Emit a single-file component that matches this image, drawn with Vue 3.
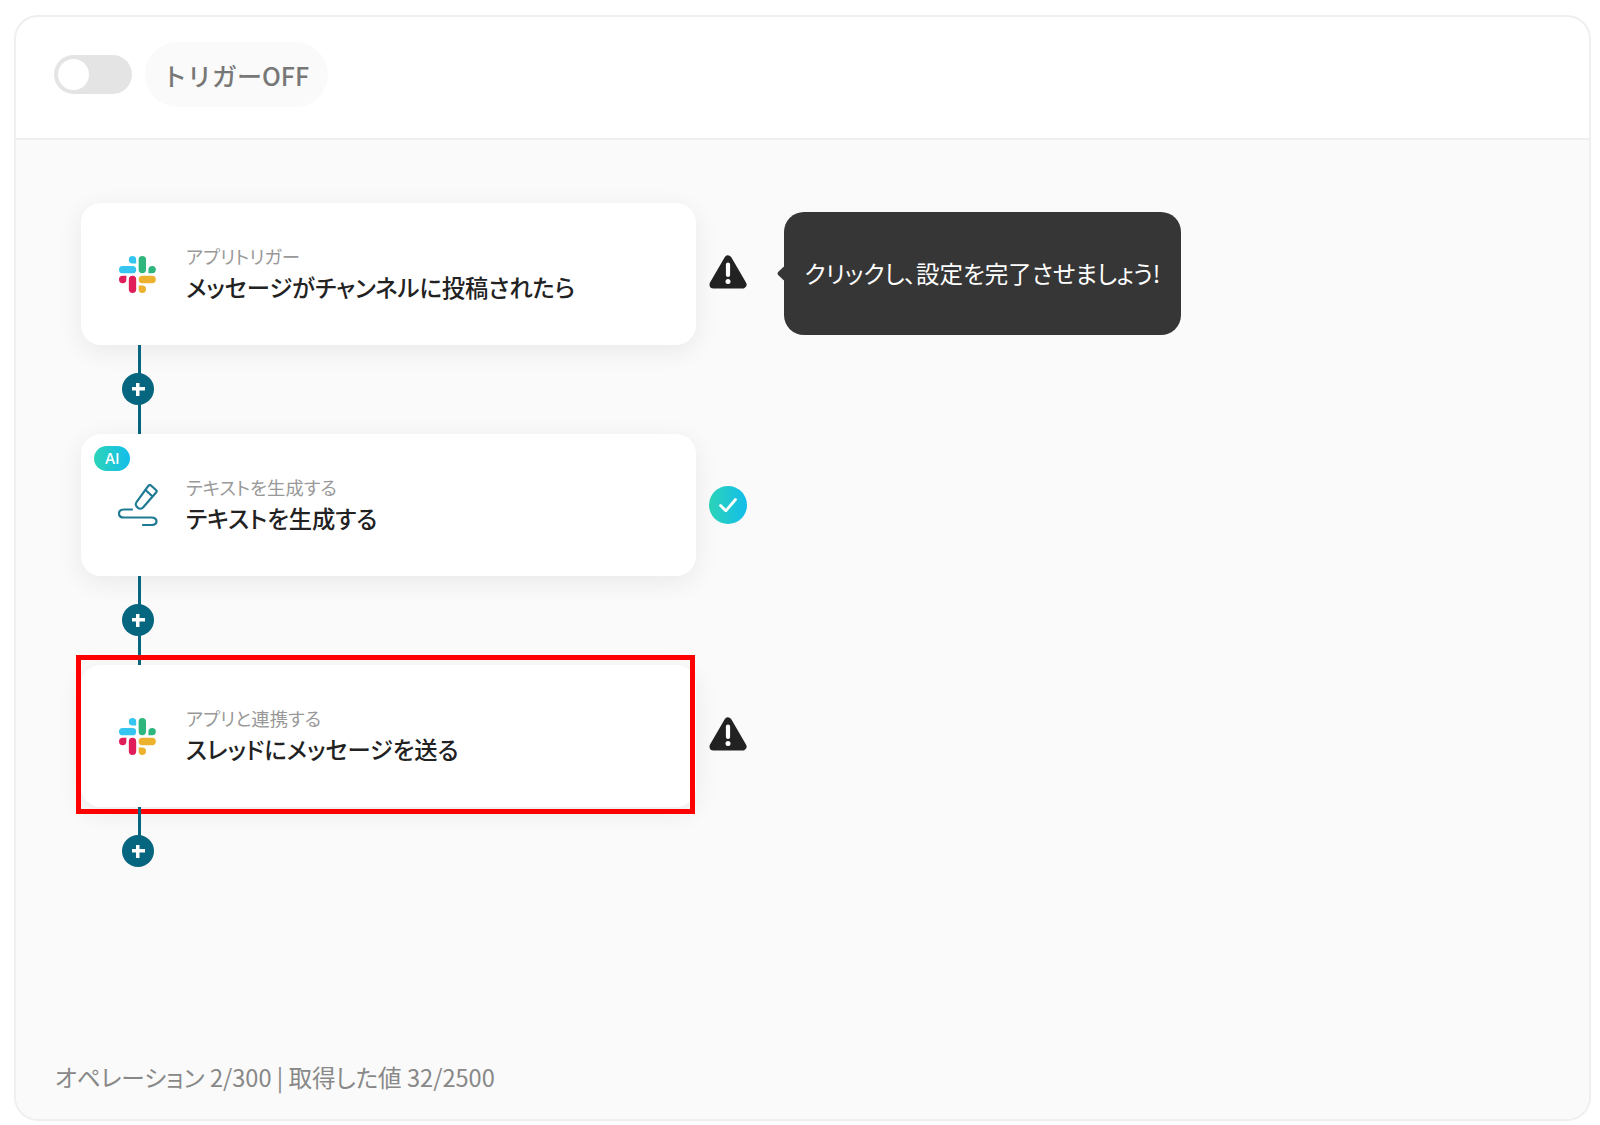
<script setup>
const steps = [
  { id: 1, icon: 'slack', label: 'アプリトリガー', title: 'メッセージがチャンネルに投稿されたら', status: 'warn', tip: 'クリックし、設定を完了させましょう!' },
  { id: 2, icon: 'pen', ai: true, label: 'テキストを生成する', title: 'テキストを生成する', status: 'ok' },
  { id: 3, icon: 'slack', label: 'アプリと連携する', title: 'スレッドにメッセージを送る', status: 'warn', marked: true },
]
</script>

<template>
  <div class="page">
    <div class="frame">
      <header class="head">
        <span class="toggle"><span class="knob"></span></span>
        <span class="pill">トリガーOFF</span>
      </header>
      <main class="body">
        <div class="flow">
          <section v-for="s in steps" :key="s.id" class="step">
            <div class="row">
              <div class="card">
                <span v-if="s.ai" class="ai">AI</span>
                <span v-if="s.marked" class="mark"></span>
                <svg v-if="s.icon === 'slack'" class="icon" viewBox="0 0 54 54">
                  <path d="M19.712.133a5.381 5.381 0 0 0-5.376 5.387 5.381 5.381 0 0 0 5.376 5.386h5.376V5.52A5.381 5.381 0 0 0 19.712.133m0 14.365H5.376A5.381 5.381 0 0 0 0 19.884a5.381 5.381 0 0 0 5.376 5.387h14.336a5.381 5.381 0 0 0 5.376-5.387 5.381 5.381 0 0 0-5.376-5.386" fill="#36C5F0"/>
                  <path d="M53.76 19.884a5.381 5.381 0 0 0-5.376-5.386 5.381 5.381 0 0 0-5.376 5.386v5.387h5.376a5.381 5.381 0 0 0 5.376-5.387m-14.336 0V5.52A5.381 5.381 0 0 0 34.048.133a5.381 5.381 0 0 0-5.376 5.387v14.364a5.381 5.381 0 0 0 5.376 5.387 5.381 5.381 0 0 0 5.376-5.387" fill="#2EB67D"/>
                  <path d="M34.048 54a5.381 5.381 0 0 0 5.376-5.387 5.381 5.381 0 0 0-5.376-5.386h-5.376v5.386A5.381 5.381 0 0 0 34.048 54m0-14.365h14.336a5.381 5.381 0 0 0 5.376-5.386 5.381 5.381 0 0 0-5.376-5.387H34.048a5.381 5.381 0 0 0-5.376 5.387 5.381 5.381 0 0 0 5.376 5.386" fill="#ECB22E"/>
                  <path d="M0 34.249a5.381 5.381 0 0 0 5.376 5.386 5.381 5.381 0 0 0 5.376-5.386v-5.387H5.376A5.381 5.381 0 0 0 0 34.25m14.336-.001v14.364A5.381 5.381 0 0 0 19.712 54a5.381 5.381 0 0 0 5.376-5.387V34.25a5.381 5.381 0 0 0-5.376-5.387 5.381 5.381 0 0 0-5.376 5.387" fill="#E01E5A"/>
                </svg>
                <svg v-else class="icon pen" viewBox="0 0 40 42" fill="none" stroke="#1f7a94" stroke-width="2.200" stroke-linecap="round" stroke-linejoin="round">
                  <path d="M33 1.500 38 6a1.800 1.800 0 0 1 .1 2.500L25 23.500a3.600 3.600 0 0 1-5 .3l-1-.9a3.600 3.600 0 0 1-.3-5L30.500 1.700A1.800 1.800 0 0 1 33 1.500Z"/>
                  <path d="M27.500 6 34 12"/>
                  <path d="M14 25.500H6C2.500 25.500 1 27.500 1 29.500S2.500 33.500 6 33.500H33C36.500 33.500 38.500 35 38.500 37.500S36.500 41 33 41H25"/>
                </svg>
                <div class="texts">
                  <div class="label">{{ s.label }}</div>
                  <div class="title">{{ s.title }}</div>
                </div>
              </div>
              <svg v-if="s.status === 'warn'" class="status" viewBox="0 0 38 36">
                <path d="M19 5.500 33.500 30.500H4.500Z" fill="#222" stroke="#222" stroke-width="8" stroke-linejoin="round"/>
                <path d="M19 10.500V21" stroke="#fff" stroke-width="4.200" stroke-linecap="round"/>
                <circle cx="19" cy="27.500" r="2.500" fill="#fff"/>
              </svg>
              <span v-else class="check">
                <svg viewBox="0 0 38 38" fill="none" stroke="#fff" stroke-width="2.800" stroke-linecap="round" stroke-linejoin="round">
                  <path d="M11.500 19.500 16.800 24.800 26.500 13.500"/>
                </svg>
              </span>
              <div v-if="s.tip" class="tip">{{ s.tip }}</div>
            </div>
            <div class="link">
              <span class="plus"></span>
            </div>
          </section>
        </div>
        <footer class="foot">オペレーション 2/300 | 取得した値 32/2500</footer>
      </main>
    </div>
  </div>
</template>

<style>
html, body { margin: 0; background: #fff; }
</style>

<style scoped>
.page {
  width: 1600px;
  height: 1125px;
  box-sizing: border-box;
  padding: 15px 9px 4px 14px;
  font-family: "Noto Sans CJK JP", "Noto Sans", sans-serif;
  font-feature-settings: "palt";
}
.frame {
  height: 100%;
  box-sizing: border-box;
  display: flex;
  flex-direction: column;
  border: 2px solid #efefef;
  border-radius: 24px;
  overflow: hidden;
  background: #fff;
}
.head {
  height: 123px;
  flex: none;
  box-sizing: border-box;
  display: flex;
  align-items: center;
  gap: 13px;
  padding: 0 0 6px 38px;
  border-bottom: 2px solid #efefef;
}
.toggle {
  width: 78px;
  height: 39px;
  box-sizing: border-box;
  padding: 4px;
  border-radius: 20px;
  background: #e4e4e4;
}
.knob {
  display: block;
  width: 31px;
  height: 31px;
  border-radius: 50%;
  background: #fff;
}
.pill {
  height: 65px;
  box-sizing: border-box;
  padding: 0 19px 0 17px;
  display: flex;
  align-items: center;
  border-radius: 33px;
  background: #fafafa;
  color: #777;
  font-size: 25px;
  font-weight: 500;
  font-feature-settings: normal;
}
.body {
  flex: 1;
  display: flex;
  flex-direction: column;
  justify-content: space-between;
  padding: 63px 0 26px 65px;
  background: #fafafa;
}
.flow {
  display: flex;
  flex-direction: column;
}
.step {
  display: flex;
  flex-direction: column;
}
.row {
  display: flex;
  align-items: center;
}
.card {
  position: relative;
  width: 615px;
  height: 142px;
  flex: none;
  box-sizing: border-box;
  display: flex;
  align-items: center;
  padding-left: 38px;
  gap: 30px;
  border-radius: 20px;
  background: #fff;
  box-shadow: 0 6px 26px rgba(0, 0, 0, 0.07);
}
.icon {
  width: 37px;
  height: 37px;
  flex: none;
}
.icon.pen {
  width: 40px;
  height: 42px;
  margin-left: -1px;
  margin-right: -2px;
}
.ai {
  position: absolute;
  left: 13px;
  top: 12px;
  width: 36px;
  height: 25px;
  display: flex;
  align-items: center;
  justify-content: center;
  border-radius: 13px;
  background: linear-gradient(90deg, #2dd4b8, #12bdea);
  color: #fff;
  font-size: 15px;
  font-weight: 500;
  font-family: Inter, sans-serif;
}
.mark {
  position: absolute;
  left: -5px;
  top: -10px;
  width: 619px;
  height: 159px;
  box-sizing: border-box;
  border: 5px solid #ff0000;
  pointer-events: none;
}
.texts {
  display: flex;
  flex-direction: column;
  gap: 3px;
  margin-top: -2px;
}
.label {
  font-size: 18.4px;
  line-height: 24px;
  color: #999;
}
.title {
  font-size: 23.3px;
  line-height: 32px;
  font-weight: 500;
  color: #222;
}
.status {
  width: 38px;
  height: 36px;
  margin-left: 13px;
  flex: none;
  margin-top: -4px;
}
.check {
  width: 38px;
  height: 38px;
  margin-left: 13px;
  border-radius: 50%;
  background: linear-gradient(90deg, #2dd4b8, #12bdea);
}
.check svg {
  display: block;
  width: 38px;
  height: 38px;
}
.tip {
  position: relative;
  width: 397px;
  height: 123px;
  box-sizing: border-box;
  margin: -2px 0 0 37px;
  padding-bottom: 1px;
  display: flex;
  align-items: center;
  justify-content: center;
  border-radius: 20px;
  background: #363636;
  color: #fff;
  font-size: 23.5px;
}
.tip::before {
  content: "";
  position: absolute;
  left: -5px;
  top: 56px;
  width: 11px;
  height: 11px;
  background: #363636;
  border-radius: 2px;
  transform: rotate(45deg);
}
.link {
  position: relative;
  width: 3px;
  height: 89px;
  margin-left: 57px;
  background: #06657f;
}
.step:last-child .link {
  height: 43px;
  background: none;
}
.step:last-child .link::before {
  content: "";
  position: absolute;
  left: 0;
  top: 0;
  width: 3px;
  height: 30px;
  background: #06657f;
}
.plus {
  position: absolute;
  left: -16px;
  top: 28px;
  width: 32px;
  height: 32px;
  border-radius: 50%;
  background:
    linear-gradient(#fff, #fff) center / 13px 3.5px no-repeat,
    linear-gradient(#fff, #fff) center / 3.5px 13px no-repeat,
    #06657f;
}
.step:last-child .plus {
  top: 28px;
}
.foot {
  margin-left: -26px;
  font-size: 23.6px;
  line-height: 32px;
  color: #888;
}
</style>
